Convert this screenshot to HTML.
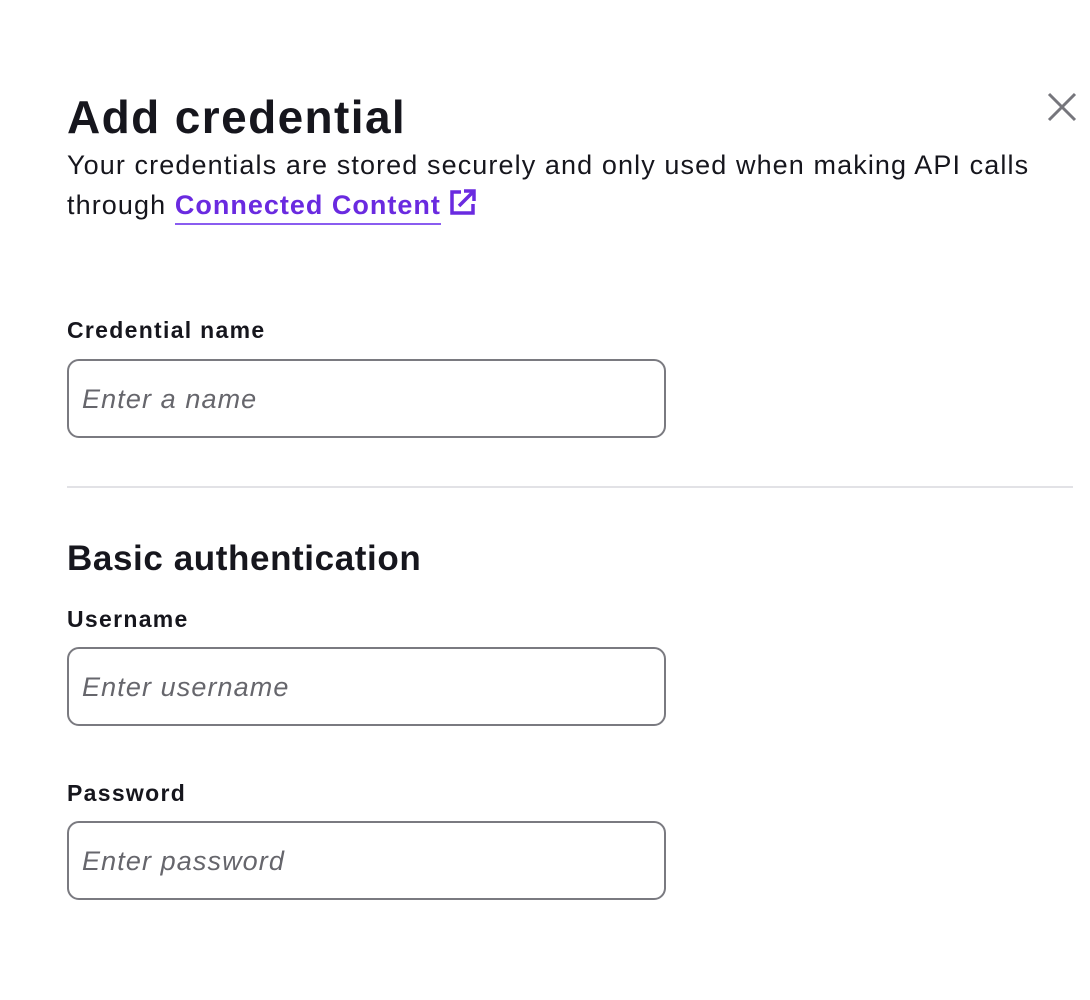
<!DOCTYPE html>
<html><head><meta charset="utf-8"><style>
html,body{margin:0;padding:0;background:#fff;width:1090px;height:1000px;overflow:hidden;font-family:"Liberation Sans",sans-serif;color:#16161d}
.a{position:absolute;white-space:nowrap}
.t{left:67px;top:94px;font-size:46px;line-height:46px;font-weight:bold;letter-spacing:1.4px}
.b{left:67px;top:145px;font-size:27px;line-height:40px;letter-spacing:1.1px}
.lnk{color:#6a2ae0;font-weight:bold;text-decoration:none;border-bottom:2px solid #8a5cf0;padding-bottom:3px;letter-spacing:1px}
.lab{left:67px;font-size:23px;line-height:23px;font-weight:bold;letter-spacing:1.3px}
.in{position:absolute;left:67px;width:595px;height:75px;border:2px solid #7a7a80;border-radius:12px;box-sizing:content-box}
.in span{position:absolute;left:13px;top:23px;font-size:27px;line-height:30px;font-style:italic;color:#66666c;letter-spacing:1.1px}
.h2{left:67px;top:541px;font-size:35px;line-height:35px;font-weight:bold;letter-spacing:0.6px}
.div{position:absolute;left:67px;top:486px;width:1006px;height:1.5px;background:#e2e2e6}
</style></head><body>
<div class="a t">Add credential</div>
<svg class="a" style="left:1046px;top:91px" width="32" height="32" viewBox="0 0 32 32"><path d="M3 3L29 29M29 3L3 29" stroke="#76767c" stroke-width="3" fill="none"/></svg>
<div class="a b">Your credentials are stored securely and only used when making API calls<br>through <span class="lnk">Connected Content</span><svg style="vertical-align:-2px;margin-left:8px" width="28" height="28" viewBox="0 0 28 28"><path d="M12 4H3V25H24V16" stroke="#6a2ae0" stroke-width="3.5" fill="none"/><path d="M10 18L25 3M15 3H25V13" stroke="#6a2ae0" stroke-width="3.5" fill="none"/></svg></div>
<div class="a lab" style="top:319px">Credential name</div>
<div class="in" style="top:359px"><span>Enter a name</span></div>
<div class="div"></div>
<div class="a h2">Basic authentication</div>
<div class="a lab" style="top:608px">Username</div>
<div class="in" style="top:647px"><span>Enter username</span></div>
<div class="a lab" style="top:782px">Password</div>
<div class="in" style="top:821px"><span>Enter password</span></div>
</body></html>
